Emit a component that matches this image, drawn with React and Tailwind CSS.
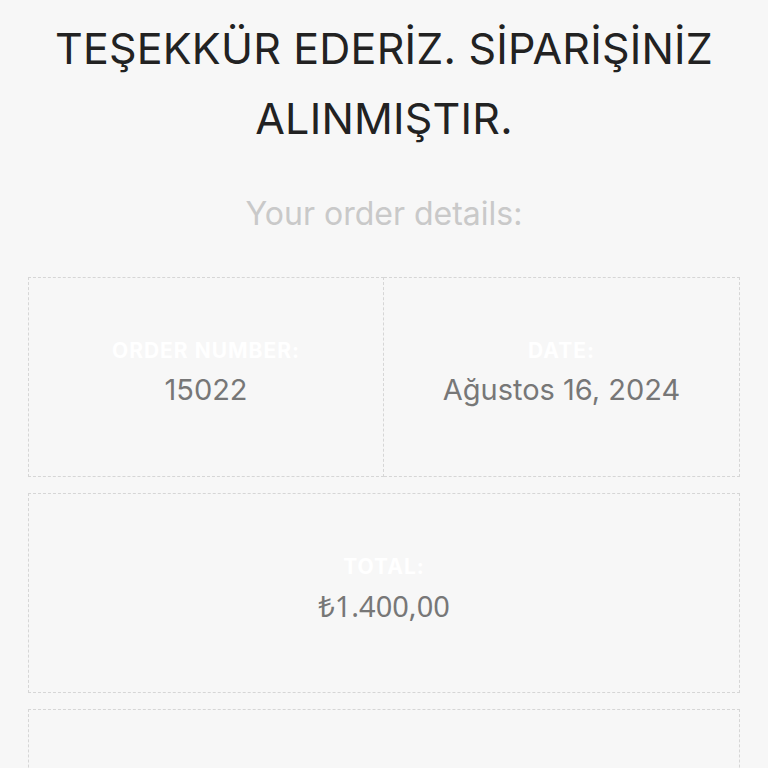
export default function App() {
  return (
    <div className="min-h-screen bg-[#f7f7f7] px-7 font-['Inter','Liberation_Sans',sans-serif]">
      <h1 className="pt-[13px] text-center text-[43px] font-normal leading-[70px] tracking-[0.2px] text-[#222]">
        TEŞEKKÜR EDERİZ. SİPARİŞİNİZ
        <br />
        ALINMIŞTIR.
      </h1>

      <p className="mt-[41px] text-center text-[32px] leading-[40px] text-[#c9c9c9]">Your order details:</p>

      <div className="mt-[43px] grid grid-cols-2">
        <div className="flex h-[200px] flex-col items-center justify-center border border-dashed border-[#d6d6d6] pb-2">
          <div className="text-[21px] font-bold leading-[28px] tracking-[1px] text-white">ORDER NUMBER:</div>
          <div className="mt-[6px] text-[29px] leading-[38px] text-[#777]">15022</div>
        </div>
        <div className="flex h-[200px] flex-col items-center justify-center border border-l-0 border-dashed border-[#d6d6d6] pb-2">
          <div className="text-[21px] font-bold leading-[28px] tracking-[1px] text-white">DATE:</div>
          <div className="mt-[6px] text-[29px] leading-[38px] text-[#777]">Ağustos 16, 2024</div>
        </div>
      </div>

      <div className="mt-4 flex h-[200px] flex-col items-center justify-center border border-dashed border-[#d6d6d6] pb-2">
        <div className="text-[21px] font-bold leading-[28px] tracking-[1px] text-white">TOTAL:</div>
        <div className="mt-[6px] font-['Noto_Sans',sans-serif] text-[29px] leading-[38px] text-[#777]">₺1.400,00</div>
      </div>

      <div className="mt-4 h-[200px] border border-dashed border-[#d6d6d6]"></div>
    </div>
  );
}
